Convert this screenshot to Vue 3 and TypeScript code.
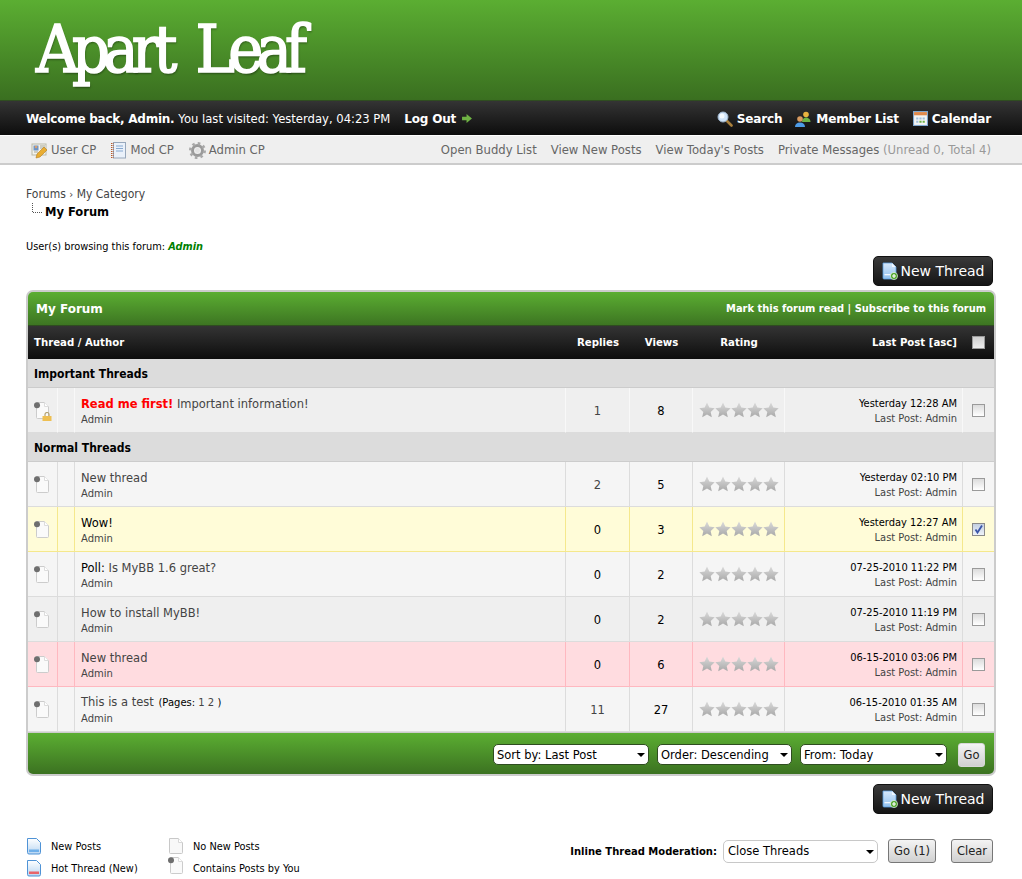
<script setup lang="ts">
interface Row {
  tone: string
  title: string
  replies: string
  views: string
  date: string
  pages?: boolean
  poll?: boolean
  strong?: boolean
  checked?: boolean
}
const rows: Row[] = [
  { tone: 'a', title: 'New thread', replies: '2', views: '5', date: 'Yesterday 02:10 PM' },
  { tone: 'yel', title: 'Wow!', replies: '0', views: '3', date: 'Yesterday 12:27 AM', strong: true, checked: true },
  { tone: 'a', title: 'Is MyBB 1.6 great?', replies: '0', views: '2', date: '07-25-2010 11:22 PM', poll: true },
  { tone: 'b', title: 'How to install MyBB!', replies: '0', views: '2', date: '07-25-2010 11:19 PM' },
  { tone: 'pink', title: 'New thread', replies: '0', views: '6', date: '06-15-2010 03:06 PM' },
  { tone: 'a', title: 'This is a test', replies: '11', views: '27', date: '06-15-2010 01:35 AM', pages: true }
]
const stars = [0, 1, 2, 3, 4]
</script>

<template>
  <div class="page">
    <svg class="defs" width="0" height="0" aria-hidden="true">
      <defs>
        <linearGradient id="starG" x1="0" y1="0" x2="0" y2="1">
          <stop offset="0" stop-color="#dadada" />
          <stop offset="1" stop-color="#a8a8a8" />
        </linearGradient>
        <linearGradient id="blueG" x1="0" y1="0" x2="0" y2="1">
          <stop offset="0" stop-color="#ffffff" />
          <stop offset="1" stop-color="#b9d6f2" />
        </linearGradient>
        <linearGradient id="blueN" x1="0" y1="0" x2="0" y2="1">
          <stop offset="0" stop-color="#d7e8fa" />
          <stop offset="1" stop-color="#8fc0f0" />
        </linearGradient>
        <symbol id="star" viewBox="0 0 16 16">
          <path d="M8 .6l2.3 5 5.4.6-4 3.700 1.100 5.400L8 12.600l-4.800 2.700 1.100-5.400-4-3.700 5.400-.6z" fill="url(#starG)" />
        </symbol>
        <symbol id="doc" viewBox="0 0 16 18">
          <path d="M1.500 1.500h9l4 4v10a1 1 0 0 1-1 1h-11a1 1 0 0 1-1-1z" fill="#f8f8f8" stroke="#c8c8c8" />
          <path d="M10.500 1.500v4h4" fill="#fff" stroke="#d8d8d8" />
        </symbol>
        <symbol id="docOwn" viewBox="0 0 16 18">
          <path d="M2.500 .5h8l4 4v11a1 1 0 0 1-1 1h-10a1 1 0 0 1-1-1z" fill="#fafafa" stroke="#cccccc" />
          <path d="M10.500 .5v4h4" fill="#fff" stroke="#dcdcdc" />
          <circle cx="3" cy="3.300" r="3" fill="#6e6e6e" />
        </symbol>
        <symbol id="docBlue" viewBox="0 0 16 18">
          <path d="M1.500 1.500h9l4 4v10a1.500 1.500 0 0 1-1.500 1.500h-10a1.500 1.500 0 0 1-1.500-1.500z" fill="url(#blueG)" stroke="#4f93d6" />
          <rect x="3" y="12.500" width="10" height="2.500" fill="#6fb0ea" />
        </symbol>
        <symbol id="docHot" viewBox="0 0 16 18">
          <path d="M1.500 1.500h9l4 4v10a1.500 1.500 0 0 1-1.500 1.500h-10a1.500 1.500 0 0 1-1.500-1.500z" fill="url(#blueG)" stroke="#4f93d6" />
          <rect x="3" y="12.500" width="10" height="2.500" fill="#e8646a" />
        </symbol>
        <symbol id="docNew" viewBox="0 0 16 18">
          <path d="M1 1h9l4 4v11a1 1 0 0 1-1 1h-11a1 1 0 0 1-1-1z" fill="url(#blueN)" stroke="#5a9fe0" stroke-width=".8" />
          <path d="M10 1v4h4" fill="#f0f7ff" />
          <rect x="2.500" y="12" width="7" height="1.300" fill="#f2f8ff" />
          <circle cx="12" cy="14" r="3.600" fill="#4ea52c" stroke="#fff" stroke-width=".6" />
          <path d="M12 12v4M10 14h4" stroke="#fff" stroke-width="1.200" />
        </symbol>
      </defs>
    </svg>

    <header class="banner">
      <a class="logo">Apart Leaf</a>
    </header>

    <nav class="topbar">
      <div class="welcome">
        <strong class="w-name">Welcome back, Admin.</strong>
        <span class="w-visit">You last visited: Yesterday, 04:23 PM</span>
        <strong class="logout">Log Out</strong>
        <svg class="arrow" width="10" height="9" viewBox="0 0 11 10"><path d="M0 3h5V0l6 5-6 5V7H0z" fill="#6fb344" /></svg>
      </div>
      <div class="toplinks">
        <span class="tl">
          <svg width="16" height="16" viewBox="0 0 16 16">
            <path d="M9.500 9.500l5 5" stroke="#a9803d" stroke-width="2.600" stroke-linecap="round" />
            <circle cx="6" cy="6" r="5" fill="#cfe4fa" stroke="#9db4cc" />
            <circle cx="5" cy="5" r="2.500" fill="#f4faff" />
          </svg>
          Search
        </span>
        <span class="tl ml">
          <svg width="17" height="16" viewBox="0 0 17 16">
            <circle cx="11" cy="3.500" r="2.800" fill="#e8b23f" />
            <path d="M7 11c0-3 2-4.500 4-4.500s4.500 1.500 4.500 4.500z" fill="#6db345" />
            <circle cx="5" cy="8" r="2.800" fill="#d89a60" />
            <path d="M0 16c0-3 2-4.500 5-4.500s5 1.500 5 4.500z" fill="#4d9be6" />
          </svg>
          Member List
        </span>
        <span class="tl cal">
          <svg width="15" height="15" viewBox="0 0 14 14">
            <rect x=".5" y=".5" width="13" height="13" fill="#f4f4f4" stroke="#7fa7cf" />
            <rect x="1" y="1" width="12" height="3" fill="#e08a4c" />
            <path d="M3 6h2v2H3zM6 6h2v2H6zM9 6h2v2H9zM3 9h2v2H3z" fill="#9fbfdc" />
            <path d="M6 9h2v2H6zM9 9h2v2H9z" fill="#6db345" />
          </svg>
          Calendar
        </span>
      </div>
    </nav>

    <nav class="subbar">
      <div class="cp">
        <span class="cp-item">
          <svg width="17" height="17" viewBox="0 0 17 17">
            <rect x="1" y="2" width="14" height="11" fill="#f3f3ee" stroke="#b9b9a8" />
            <rect x="2.500" y="3.500" width="5" height="5" fill="#6d94c5" />
            <circle cx="5" cy="5" r="1.300" fill="#d8a070" />
            <path d="M9 4h5M9 6h5M3 10h4" stroke="#a7a797" />
            <path d="M5 16l1-4 7-7 3 3-7 7z" fill="#e9ad32" stroke="#b67c1a" stroke-width=".6" />
          </svg>
          User CP
        </span>
        <span class="cp-item mod-cp">
          <svg width="15" height="17" viewBox="0 0 15 17">
            <rect x="2.500" y=".5" width="12" height="15.500" fill="#eaf1fa" stroke="#98a8bc" />
            <path d="M.5 1v15M2 1v15" stroke="#b55a2e" stroke-dasharray="1 1" />
            <path d="M5 4h7M5 6.500h7M5 9h7" stroke="#86a8d0" />
          </svg>
          Mod CP
        </span>
        <span class="cp-item">
          <svg width="17" height="17" viewBox="0 0 17 17">
            <circle cx="8.500" cy="8.500" r="5" fill="none" stroke="#9a9a9a" stroke-width="3" />
            <circle cx="8.500" cy="8.500" r="7" fill="none" stroke="#a8a8a8" stroke-width="3" stroke-dasharray="2.500 3" />
            <circle cx="8.500" cy="8.500" r="2.400" fill="#e3e3e3" />
          </svg>
          Admin CP
        </span>
      </div>
      <div class="sub-right">
        <span>Open Buddy List</span>
        <span>View New Posts</span>
        <span>View Today's Posts</span>
        <span>Private Messages <em class="pm">(Unread 0, Total 4)</em></span>
      </div>
    </nav>

    <main class="content">
      <div class="crumbs">
        <div>Forums <span class="sep">›</span> My Category</div>
        <div class="crumb-here">
          <svg width="13" height="12" viewBox="0 0 13 12"><path d="M.5 0v9.500H10" fill="none" stroke="#555" stroke-dasharray="1 1" /></svg>
          <strong>My Forum</strong>
        </div>
      </div>

      <div class="browsing">User(s) browsing this forum: <em class="admin">Admin</em></div>

      <div class="btn-row">
        <span class="new-btn">
          <svg width="16" height="18" viewBox="0 0 16 18"><use href="#docNew" /></svg>
          New Thread
        </span>
      </div>

      <div class="forum">
        <div class="forum-head">
          <strong class="forum-title">My Forum</strong>
          <strong class="forum-links">Mark this forum read | Subscribe to this forum</strong>
        </div>
        <table class="threads">
          <colgroup>
            <col class="c1" /><col class="c2" /><col /><col class="c4" /><col class="c5" /><col class="c6" /><col class="c7" /><col class="c8" />
          </colgroup>
          <thead>
            <tr class="cols">
              <th colspan="3" class="th-left">Thread / Author</th>
              <th>Replies</th>
              <th>Views</th>
              <th>Rating</th>
              <th class="th-right">Last Post [asc]</th>
              <th><label class="cb"><input type="checkbox" /></label></th>
            </tr>
          </thead>
          <tbody>
            <tr class="cat"><td colspan="8">Important Threads</td></tr>
            <tr class="row b first">
              <td class="ic">
                <span class="own-lock">
                  <svg width="16" height="18" viewBox="0 0 16 18"><use href="#docOwn" /></svg>
                  <svg class="lock" width="10" height="9" viewBox="0 0 10 9">
                    <path d="M3 4V2.500a2 2 0 0 1 4 0V4" fill="none" stroke="#b4a272" stroke-width="1.200" />
                    <rect x=".5" y="4" width="9" height="5" fill="#eebf52" />
                  </svg>
                </span>
              </td>
              <td></td>
              <td class="subject">
                <div class="t"><strong class="red">Read me first!</strong> Important information!</div>
                <div class="by">Admin</div>
              </td>
              <td class="num">1</td>
              <td class="num dark">8</td>
              <td class="rate"><span class="stars"><svg v-for="s in stars" :key="s" width="16" height="16"><use href="#star" /></svg></span></td>
              <td class="last"><div class="d">Yesterday 12:28 AM</div><div class="lp">Last Post: Admin</div></td>
              <td class="chk"><label class="cb"><input type="checkbox" /></label></td>
            </tr>
            <tr class="cat cat2"><td colspan="8">Normal Threads</td></tr>
            <tr v-for="r in rows" :key="r.date" class="row" :class="r.tone">
              <td class="ic"><span class="own-lock"><svg width="16" height="18" viewBox="0 0 16 18"><use href="#docOwn" /></svg></span></td>
              <td></td>
              <td class="subject">
                <div class="t" :class="{ strong: r.strong }">
                  <span v-if="r.poll" class="poll">Poll: </span>{{ r.title }}
                  <span v-if="r.pages" class="pages">(Pages: <span class="pg">1 2</span> )</span>
                </div>
                <div class="by">Admin</div>
              </td>
              <td class="num" :class="{ dark: r.replies === '0' }">{{ r.replies }}</td>
              <td class="num dark">{{ r.views }}</td>
              <td class="rate"><span class="stars"><svg v-for="s in stars" :key="s" width="16" height="16"><use href="#star" /></svg></span></td>
              <td class="last"><div class="d">{{ r.date }}</div><div class="lp">Last Post: Admin</div></td>
              <td class="chk">
                <label class="cb" :class="{ on: r.checked }">
                  <input type="checkbox" :checked="r.checked" />
                  <svg v-if="r.checked" class="tick" width="11" height="11" viewBox="0 0 11 11"><path d="M2.500 5.500l2 3L9 1.500" fill="none" stroke="#3a55a8" stroke-width="1.800" /></svg>
                </label>
              </td>
            </tr>
          </tbody>
        </table>
        <div class="forum-foot">
          <span class="pick s1"><select><option>Sort by: Last Post</option></select></span>
          <span class="pick s2"><select><option>Order: Descending</option></select></span>
          <span class="pick s3"><select><option>From: Today</option></select></span>
          <button class="go">Go</button>
        </div>
      </div>

      <div class="btn-row btn-row2">
        <span class="new-btn">
          <svg width="16" height="18" viewBox="0 0 16 18"><use href="#docNew" /></svg>
          New Thread
        </span>
      </div>

      <div class="bottom">
        <div class="legend">
          <div class="lg"><svg width="16" height="18" viewBox="0 0 16 18"><use href="#docBlue" /></svg>New Posts</div>
          <div class="lg"><svg width="16" height="18" viewBox="0 0 16 18"><use href="#doc" /></svg>No New Posts</div>
          <div class="lg"><svg width="16" height="18" viewBox="0 0 16 18"><use href="#docHot" /></svg>Hot Thread (New)</div>
          <div class="lg"><svg class="own" width="16" height="18" viewBox="0 0 16 18"><use href="#docOwn" /></svg>Contains Posts by You</div>
        </div>
        <div class="mod">
          <strong class="mod-label">Inline Thread Moderation:</strong>
          <span class="pick s4"><select><option>Close Threads</option></select></span>
          <button class="go go1">Go (1)</button>
          <button class="go clear">Clear</button>
        </div>
      </div>
    </main>
  </div>
</template>

<style scoped>
.page {
  width: 1022px;
  height: 879px;
  overflow: hidden;
  background: #fff;
  font-family: "DejaVu Sans", Verdana, sans-serif;
  font-size: 11px;
  color: #333;
}
.defs { position: absolute; }
svg { flex: none; }

.banner {
  height: 100px;
  box-sizing: border-box;
  padding: 10px 0 0 36px;
  background: linear-gradient(#5bae32, #3a6f20);
}
.logo {
  display: block;
  font-family: "DejaVu Serif", serif;
  font-stretch: condensed;
  font-size: 66px;
  line-height: 80px;
  letter-spacing: -6.800px;
  word-spacing: 13px;
  color: #fff;
  -webkit-text-stroke: 1.600px #fff;
  text-shadow: 1px 2px 2px rgba(0, 0, 0, .35);
}

.topbar {
  height: 35px;
  box-sizing: border-box;
  padding: 1px 31px 0 26px;
  border-top: 1px solid #2f4d20;
  display: flex;
  align-items: center;
  justify-content: space-between;
  background: linear-gradient(#343434, #0d0d0d);
  color: #fff;
}
.welcome { display: flex; align-items: center; }
.w-name { font-size: 12px; letter-spacing: -.25px; }
.w-visit { font-size: 11.600px; margin-left: 4px; }
.logout { font-size: 12px; margin-left: 14px; letter-spacing: -.2px; }
.arrow { margin-left: 6px; }
.toplinks { display: flex; align-items: center; gap: 14px; font-size: 12.100px; font-weight: 700; letter-spacing: -.2px; }
.tl { display: flex; align-items: center; gap: 4px; }
.ml { margin-left: -1px; }

.subbar {
  height: 29px;
  box-sizing: border-box;
  margin-top: 1px;
  padding: 1px 31px 0 31px;
  display: flex;
  align-items: center;
  justify-content: space-between;
  background: #efefef;
  border-bottom: 2px solid #ccc;
  font-size: 11.650px;
  color: #666;
}
.cp { display: flex; gap: 15px; }
.cp-item { display: flex; align-items: center; gap: 3px; }
.mod-cp { gap: 4px; }
.sub-right { display: flex; gap: 14px; }
.pm { font-style: normal; color: #999; }

.content { padding: 0 26px; }
.crumbs { padding-top: 22px; font-size: 12px; line-height: 15px; color: #444; font-stretch: condensed; }
.sep { font-size: 11px; }
.crumb-here { display: flex; align-items: flex-start; padding-left: 6px; margin-top: 1px; color: #000; font-size: 12.800px; line-height: 17px; }
.browsing { margin-top: 19px; line-height: 15px; font-size: 10.900px; color: #000; font-stretch: condensed; }
.admin { color: #008000; font-weight: 700; }

.btn-row { display: flex; justify-content: flex-end; margin-top: 2px; padding-right: 3px; }
.btn-row2 { margin-top: 8px; }
.new-btn {
  width: 120px;
  height: 30px;
  box-sizing: border-box;
  border: 1px solid #111;
  border-radius: 5px;
  background: linear-gradient(#3a3a3a, #151515);
  color: #fff;
  font-size: 14px;
  display: flex;
  align-items: center;
  justify-content: center;
  gap: 3px;
}

.forum {
  margin-top: 4px;
  box-sizing: border-box;
  width: 970px;
  height: 486px;
  border: 2px solid #ccc;
  border-radius: 7px;
  overflow: hidden;
  background: #ccc;
}
.forum-head {
  height: 33px;
  box-sizing: border-box;
  padding: 0 8px;
  display: flex;
  align-items: center;
  justify-content: space-between;
  background: linear-gradient(#5bae32, #3d7522);
  color: #fff;
}
.forum-title { font-size: 12px; }
.forum-links { font-size: 11px; font-stretch: condensed; }

.threads {
  width: 966px;
  table-layout: fixed;
  border-collapse: separate;
  border-spacing: 0;
}
.c1 { width: 30px; }
.c2 { width: 17px; }
.c4 { width: 64px; }
.c5 { width: 63px; }
.c6 { width: 92px; }
.c7 { width: 178px; }
.c8 { width: 31px; }

.cols th {
  height: 34px;
  padding: 0;
  background: linear-gradient(#343434, #0d0d0d);
  border-top: 1px solid #2f4d20;
  box-sizing: border-box;
  color: #fff;
  font-size: 11.300px;
  font-stretch: condensed;
}
.th-left { text-align: left; padding-left: 6px !important; }
.th-right { text-align: right; padding-right: 6px !important; }

.cat td {
  height: 29px;
  box-sizing: border-box;
  padding: 1px 6px 0;
  background: #dcdcdc;
  border-bottom: 1px solid #ccc;
  font-size: 12px;
  font-stretch: condensed;
  font-weight: 700;
  color: #000;
}
.row td {
  height: 45px;
  box-sizing: border-box;
  padding: 1px 0 0;
  border-right: 1px solid #dcdcdc;
  border-bottom: 1px solid #dcdcdc;
}
.row td:last-child { border-right: 0; }
.row.a td { background: #f5f5f5; }
.row.b td { background: #efefef; }
.row.first td { border-right-color: #f8f8f8; }
.row.yel td { background: #fffcd8; border-color: #f5e88c; }
.row.pink td { background: #ffdce0; border-color: #ffb8c0; }

.ic { text-align: center; }
.own-lock { position: relative; display: inline-block; width: 16px; height: 18px; margin-right: 2px; vertical-align: middle; }
.own-lock svg { display: block; }
.lock { position: absolute; right: -2px; bottom: -1px; }
.row td.subject { padding: 3px 0 0 6px; }
.t { font-size: 11.500px; line-height: 16px; color: #444; }
.t.strong { color: #000; }
.red { color: #f00; }
.poll { color: #000; }
.pages { font-size: 10px; color: #000; margin-left: 1px; }
.pg { color: #444; }
.by { font-size: 10px; line-height: 16px; color: #444; }
.num { text-align: center; font-size: 11.500px; color: #444; }
.num.dark { color: #000; }
.row td.rate { text-align: center; padding: 0; }
.stars { display: inline-flex; vertical-align: middle; margin-left: 1px; }
.stars svg { width: 16px; height: 16px; }
.last { text-align: right; padding-right: 5px !important; font-size: 11px; font-stretch: condensed; line-height: 15px; }
.d { color: #000; }
.lp { color: #444; }
.chk { text-align: center; }
.cb { position: relative; display: inline-block; width: 13px; height: 13px; vertical-align: middle; }
.cb input {
  appearance: none;
  display: block;
  margin: 0;
  width: 13px;
  height: 13px;
  box-sizing: border-box;
  border: 1px solid #9a9a9a;
  background: linear-gradient(#dcdcdc, #fff);
}
.cols .cb input { background: linear-gradient(#cfcfcf, #eee); }
.cb.on input { background: linear-gradient(#c3cfe2, #eef2f8); border-color: #8a8a8a; }
.tick { position: absolute; left: 1px; top: 1px; }

.forum-foot {
  height: 43px;
  margin-top: 1px;
  box-sizing: border-box;
  padding: 0 9px 0 0;
  display: flex;
  align-items: center;
  justify-content: flex-end;
  background: linear-gradient(#5bae32, #3a6f20);
}
.pick {
  position: relative;
  display: inline-block;
  height: 21px;
  box-sizing: border-box;
  border: 1px solid #2f4d20;
  border-radius: 5px;
  background: #fff;
}
.pick::after {
  content: "";
  position: absolute;
  right: 3px;
  top: 8px;
  border: 4px solid transparent;
  border-top: 4px solid #000;
  border-bottom: 0;
}
.pick select {
  appearance: none;
  display: block;
  width: 100%;
  height: 100%;
  border: 0;
  padding: 0 3px;
  margin: 0;
  background: transparent;
  font-family: "DejaVu Sans", Verdana, sans-serif;
  font-size: 11.500px;
  color: #000;
}
.s1 { width: 156px; }
.s2 { width: 135px; margin-left: 8px; }
.s3 { width: 147px; margin-left: 8px; }
.s4 { width: 155px; height: 23px; border-color: #c8c8c8; }
.s4 select { padding-left: 4px; }
.s4::after { top: 9px; }
.go {
  width: 27px;
  height: 24px;
  margin-left: 11px;
  padding: 0;
  box-sizing: border-box;
  border: 1px solid #d8d8d8;
  border-radius: 3px;
  background: linear-gradient(#f4f4f4, #d0d0d0);
  font-family: "DejaVu Sans", Verdana, sans-serif;
  font-size: 11.500px;
  color: #222;
}

.bottom { display: flex; justify-content: space-between; margin-top: 13px; }
.legend {
  display: grid;
  grid-template-columns: 142px 160px;
  grid-auto-rows: 22px;
  margin-top: 8px;
  font-size: 9.800px;
  color: #000;
}
.lg { display: flex; align-items: center; gap: 9px; }
.own { margin-top: -5px; }
.mod { display: flex; align-items: center; height: 24px; margin-top: 12px; padding-right: 3px; }
.mod-label { font-size: 10px; color: #000; margin-right: 6px; }
.go1 { width: 48px; border-color: #777; margin-left: 10px; }
.clear { width: 42px; border-color: #777; margin-left: 15px; }
</style>

<style>
html, body { margin: 0; padding: 0; background: #fff; }
</style>
